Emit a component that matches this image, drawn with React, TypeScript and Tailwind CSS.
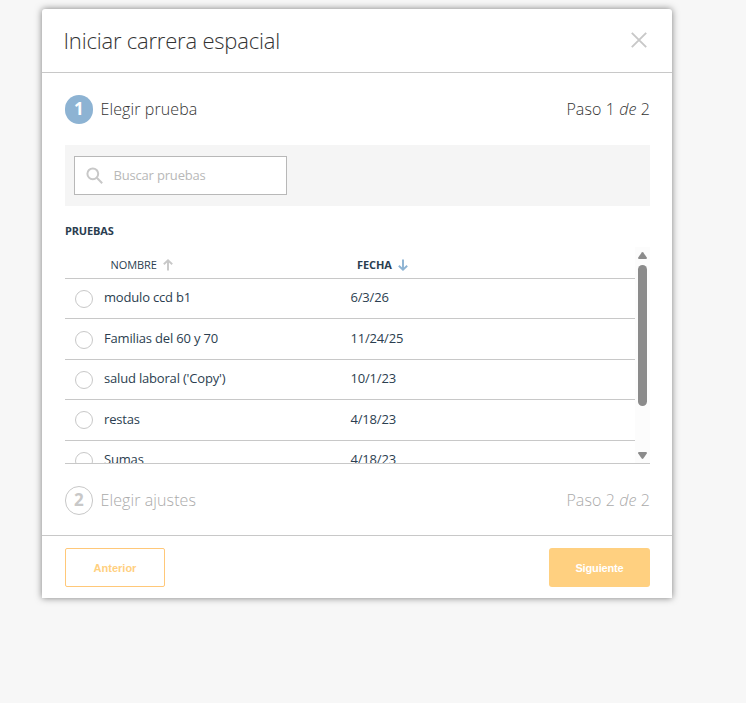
import React from "react";
import clsx from "clsx";

const quizzes = [
  { name: "modulo ccd b1", date: "6/3/26" },
  { name: "Familias del 60 y 70", date: "11/24/25" },
  { name: "salud laboral ('Copy')", date: "10/1/23" },
  { name: "restas", date: "4/18/23" },
  { name: "Sumas", date: "4/18/23" },
];

const SortArrow = ({ down, className }: { down?: boolean; className?: string }) => (
  <svg
    viewBox="0 0 10 12"
    className={clsx("h-3 w-[10px]", down && "rotate-180", className)}
    fill="none"
    stroke="currentColor"
    strokeWidth="1.9"
  >
    <path d="M5 11.5V1.6M.8 5.2L5 1.4l4.2 3.8" />
  </svg>
);

const StepHeader = ({
  step,
  title,
  active,
}: {
  step: number;
  title: string;
  active?: boolean;
}) => (
  <div
    className={clsx(
      "flex h-[30px] items-center justify-between text-base font-light tracking-[0.1px]",
      active ? "text-[#333]" : "text-[#aaa]",
    )}
  >
    <div className="flex items-center">
      <span
        className={clsx(
          "mr-[7.5px] flex h-[29px] w-[28px] items-center justify-center rounded-full pb-px text-[17px] leading-none font-bold",
          active ? "bg-[#8db3d3] text-white" : "border border-[#c8c8c8] text-[#c8c8c8]",
        )}
      >
        {step}
      </span>
      <span>{title}</span>
    </div>
    <span>
      Paso {step} <em>de</em> 2
    </span>
  </div>
);

const Scrollbar = () => (
  <div className="flex w-[15px] flex-col items-center bg-[#fcfcfc] pt-[5px] pb-[4px]">
    <svg viewBox="0 0 9 7" className="h-[7px] w-[9px]" fill="#8b8b8b">
      <path d="M3.7.5Q4.5-.3 5.3.5L8.8 5.6Q9.2 7 8 7H1Q-.2 7 .2 5.6Z" />
    </svg>
    <div className="mt-[6px] h-[141px] w-[9px] rounded-full bg-[#8b8b8b]" />
    <svg viewBox="0 0 9 7" className="mt-auto h-[7px] w-[9px] rotate-180" fill="#8b8b8b">
      <path d="M3.7.5Q4.5-.3 5.3.5L8.8 5.6Q9.2 7 8 7H1Q-.2 7 .2 5.6Z" />
    </svg>
  </div>
);

const QuizTable = () => (
  <div className="mt-[8px] flex h-[217px] overflow-hidden border-b border-[#c8c8c8]">
    <div className="flex-1 text-[#2b3e50]">
      <div className="flex h-8 items-center border-b border-[#c8c8c8] pt-[5px] text-[11px] tracking-[-0.1px]">
        <div className="flex w-[292px] items-center pl-[45.5px]">
          NOMBRE <SortArrow className="ml-[6px] text-[#c8c8c8]" />
        </div>
        <div className="flex items-center font-bold">
          FECHA <SortArrow down className="ml-[6px] text-[#8db3d3]" />
        </div>
      </div>
      {quizzes.map(({ name, date }) => (
        <div
          key={name}
          className="flex h-[40.4px] items-center border-b border-[#c8c8c8] text-[13px] tracking-[-0.18px]"
        >
          <span className="mt-px ml-[10px] size-[18px] rounded-full border border-[#c8c8c8]" />
          <span className="ml-[11px] w-[246.5px] pb-px">{name}</span>
          <span className="pb-px">{date}</span>
        </div>
      ))}
    </div>
    <Scrollbar />
  </div>
);

const App = () => {
  return (
    <div className="min-h-screen bg-[#f7f7f7] pt-[9px] font-['Open_Sans',sans-serif]">
      <div className="ml-[42px] flex h-[589px] w-[630px] flex-col rounded-t-[3px] bg-white shadow-[0_0_7px_rgba(0,0,0,0.5)]">
        <header className="flex h-16 items-center justify-between border-b border-[#c8c8c8] pr-[25px] pl-[21.5px]">
          <h1 className="text-[22px] font-light tracking-[-0.2px] text-[#333]">
            Iniciar carrera espacial
          </h1>
          <svg
            viewBox="0 0 16 16"
            className="mb-px size-4"
            fill="none"
            stroke="#c8c8c8"
            strokeWidth="1.9"
          >
            <path d="M.8.8l14.4 14.4M15.2.8L.8 15.2" />
          </svg>
        </header>

        <main className="flex-1 px-[23px] pt-[21px] pr-[22px]">
          <StepHeader step={1} title="Elegir prueba" active />
          <div className="mt-[21px] h-[61px] bg-[#f5f5f5] pt-[11px] pl-[9px]">
            <div className="flex h-[39px] w-[213px] items-center border border-[#b8b8b8] bg-white pl-[11px]">
              <svg
                viewBox="0 0 17 17"
                className="size-[17px]"
                fill="none"
                stroke="#c8c8c8"
                strokeWidth="2"
              >
                <circle cx="6.8" cy="6.8" r="5.4" />
                <path d="M10.8 10.8l5.4 5.4" />
              </svg>
              <input
                className="ml-[10.5px] w-[160px] text-[13px] tracking-[-0.18px] outline-none placeholder:text-[#b8b8b8]"
                placeholder="Buscar pruebas"
              />
            </div>
          </div>
          <h2 className="mt-[17px] h-4 text-[11px] leading-4 font-bold tracking-[-0.15px] text-[#2b3e50]">
            PRUEBAS
          </h2>
          <QuizTable />
          <div className="mt-[21px]">
            <StepHeader step={2} title="Elegir ajustes" />
          </div>
        </main>

        <footer className="flex h-[63px] items-center justify-between border-t border-[#c8c8c8] pt-px pr-[22px] pl-[23px] font-['Liberation_Sans',Arial,sans-serif] text-[11px] font-bold">
          <button className="h-[39px] w-[100px] rounded-[2px] border border-[#ffc879] pt-px text-[#ffd080]">
            Anterior
          </button>
          <button className="h-[39px] w-[101px] rounded-[3px] bg-[#ffd080] pt-px tracking-[-0.15px] text-white">
            Siguiente
          </button>
        </footer>
      </div>
    </div>
  );
};

export default App;
